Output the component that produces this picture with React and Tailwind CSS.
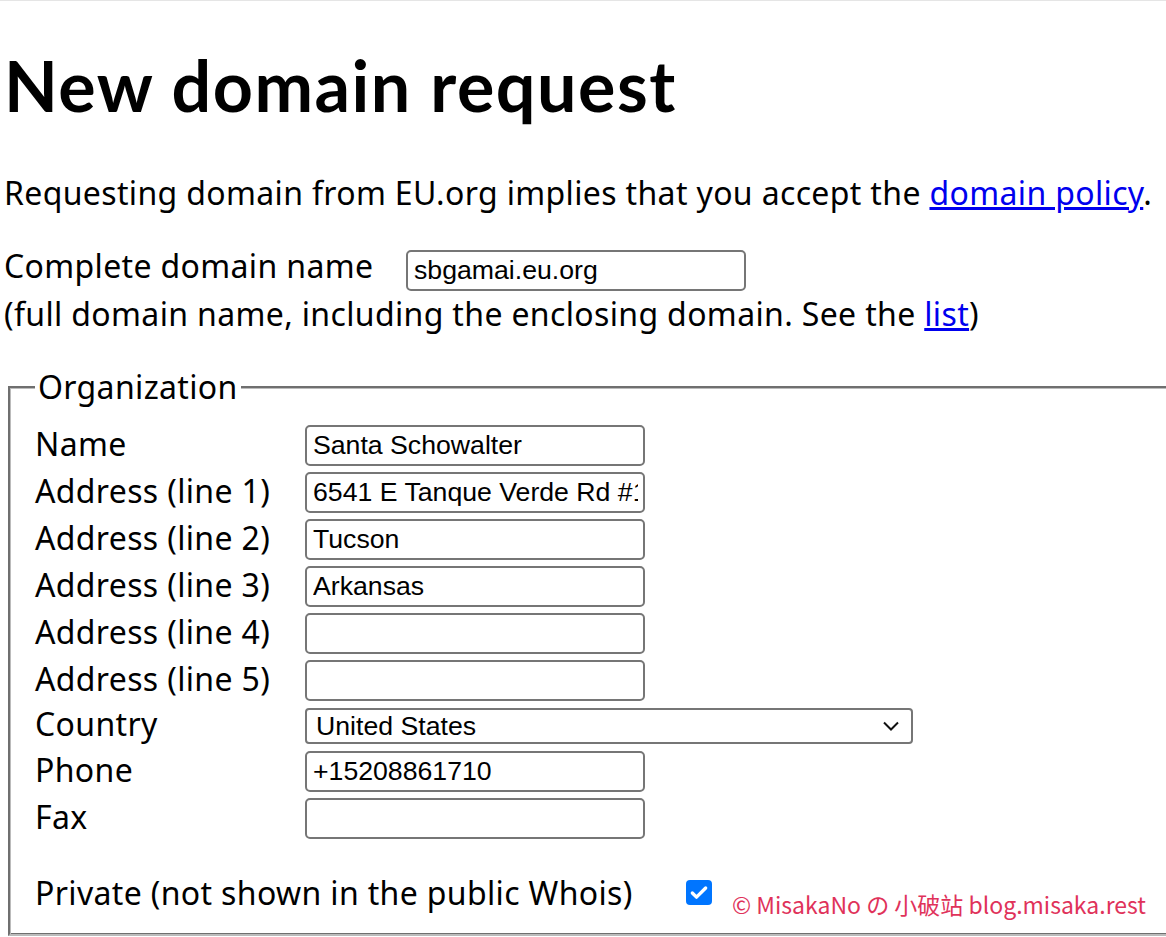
import { Check } from "lucide-react";

const inputClass =
  "h-[41px] w-[340px] rounded-[5px] border-2 border-[#767676] bg-white pl-[6px] pr-[5px] font-['Liberation_Sans',Arial,sans-serif] text-[26.67px] tracking-normal text-black outline-none";

const rows = [
  { label: "Name", value: "Santa Schowalter" },
  { label: "Address (line 1)", value: "6541 E Tanque Verde Rd #1" },
  { label: "Address (line 2)", value: "Tucson" },
  { label: "Address (line 3)", value: "Arkansas" },
  { label: "Address (line 4)", value: "" },
  { label: "Address (line 5)", value: "" },
];

function Row({ label, children, height = "h-[47px]" }) {
  return (
    <div className={`flex items-center ${height}`}>
      <label className="mb-[4px] w-[270px] shrink-0 leading-[38px]">{label}</label>
      {children}
    </div>
  );
}

export default function App() {
  return (
    <div className="relative h-[937px] w-[1166px] overflow-hidden border-t border-[#e5e5e5] bg-white font-['Noto_Sans',sans-serif] text-[32px] tracking-[0.35px] text-black">
      <div className="pl-[4px]">
        <h1 className="mt-[42px] font-['Lato',sans-serif] text-[70px] font-bold leading-[84px] tracking-[1.5px]">
          New domain request
        </h1>

        <p className="mt-[47px] leading-[38px]">
          Requesting domain from EU.org implies that you accept the{" "}
          <a href="#" className="text-[#0000ee] underline">
            domain policy
          </a>
          .
        </p>

        <div className="mt-[35px] flex h-[48px] items-start">
          <span className="w-[402px] leading-[38px]">Complete domain name</span>
          <input readOnly value="sbgamai.eu.org" className={`${inputClass} mt-[3px]`} />
        </div>
        <p className="leading-[38px]">
          (full domain name, including the enclosing domain. See the{" "}
          <a href="#" className="text-[#0000ee] underline">
            list
          </a>
          )
        </p>
      </div>

      <fieldset className="mt-[35px] ml-[8px] w-[1300px] border-2 border-t-[#6f6f6f] border-l-[#6f6f6f] border-b-[#bbbbbb] border-r-[#bbbbbb] px-[25px] pt-[16px] pb-[22px] shadow-[inset_1px_1px_0_#bbbbbb,inset_-1px_-1px_0_#6f6f6f]">
        <legend className="bg-white px-[3px] leading-[38px]">Organization</legend>

        {rows.map((r) => (
          <Row key={r.label} label={r.label}>
            <input readOnly value={r.value} className={inputClass} />
          </Row>
        ))}

        <Row label="Country" height="h-[44px]">
          <div className="flex h-[36px] w-[608px] items-center justify-between rounded-[4px] border-2 border-[#767676] pl-[9px] pr-[12px] font-['Liberation_Sans',Arial,sans-serif] text-[26.67px] tracking-normal">
            <span>United States</span>
            <svg width="16" height="10" viewBox="0 0 16 10" fill="none" stroke="#111" strokeWidth="2">
              <path d="M1 1.5 8 8.5 15 1.5" />
            </svg>
          </div>
        </Row>
        <Row label="Phone">
          <input readOnly value="+15208861710" className={inputClass} />
        </Row>
        <Row label="Fax">
          <input readOnly value="" className={inputClass} />
        </Row>

        <div className="mt-[32px] flex items-start">
          <span className="w-[651px] leading-[38px]">Private (not shown in the public Whois)</span>
          <span className="mt-[6px] flex h-[25px] w-[26px] items-center justify-center rounded-[4px] bg-[#0075ff]">
            <Check size={20} strokeWidth={4} color="white" />
          </span>
        </div>
      </fieldset>

      <div className="absolute right-[20px] top-[888px] font-['Noto_Sans_CJK_SC',sans-serif] text-[23px] leading-[30px] tracking-normal text-[#e0325a]">
        © MisakaNo の 小破站 blog.misaka.rest
      </div>
    </div>
  );
}
